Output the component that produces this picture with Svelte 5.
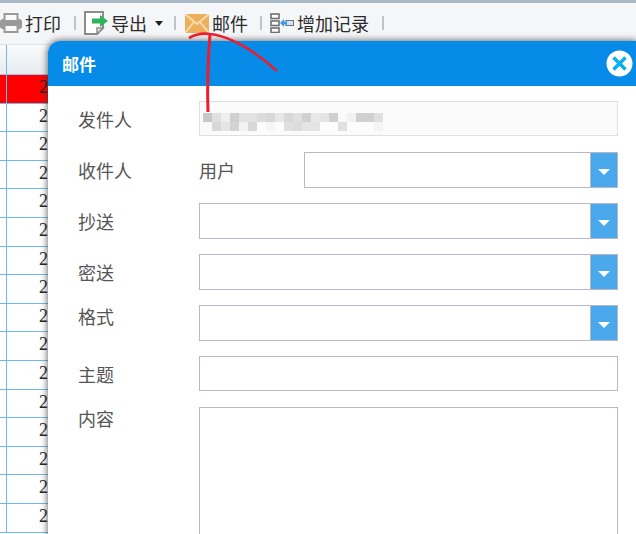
<script>
    let rows = Array(16).fill("2");
    let blurRows = [
        ["#c8c8c8", "#e0e0e0", "#eeeeee", "#d0d0d0", "#e2e2e2", "#e2e2e2", "#dcdcdc", "#d8d8d8", "#e6e6e6", "#d8d8d8", "#e0e0e0", "#d0d0d0", "#e8e8e8", "#e4e4e4", "#d0d0d0", "#fafafa", "#f2f2f2", "#d0d0d0", "#d0d0d0", "#e0e0e0"],
        ["#fafafa", "#d8d8d8", "#e4e4e4", "#d4d4d4", "#f2f2f2", "#d8d8d8", "#fcfcfc", "#f6f6f6", "#fcfcfc", "#e0e0e0", "#dcdcdc", "#e4e4e4", "#e4e4e4", "#fcfcfc", "#fcfcfc", "#e0e0e0", "#fcfcfc", "#fcfcfc", "#fcfcfc", "#f4f4f4"]
    ];
</script>

<div class="page">
    <div class="toolbar">
        <div class="tool print">
            <svg width="22" height="20" viewBox="0 0 22 20">
                <rect x="0" y="6" width="22" height="10" rx="3" fill="#9a9a9a" />
                <rect x="4.5" y="1" width="13" height="7" fill="#fafafa" stroke="#9a9a9a" stroke-width="2" />
                <rect x="4.5" y="12" width="13" height="7" fill="#fafafa" stroke="#9a9a9a" stroke-width="2" />
            </svg>
            <span>打印</span>
        </div>
        <i class="sep"></i>
        <div class="tool export">
            <svg width="24" height="24" viewBox="0 0 24 24">
                <path d="M1 1H19V17L13 23H1Z" fill="#fff" stroke="#8c8c8c" stroke-width="2" />
                <path d="M13 23V17H19Z" fill="#e6e6e6" stroke="#8c8c8c" stroke-width="1.5" />
                <path d="M8 7.5H16V4L24 10L16 16V12.5H8Z" fill="#2fb45c" />
            </svg>
            <span>导出</span>
            <b class="caret"></b>
        </div>
        <i class="sep"></i>
        <div class="tool mail">
            <svg width="24" height="19" viewBox="0 0 24 19">
                <rect width="24" height="19" fill="#ecb05c" />
                <path d="M0 0L12 10L24 0M0 19L9 8M24 19L15 8" fill="none" stroke="#f8dcae" stroke-width="1.8" />
            </svg>
            <span>邮件</span>
        </div>
        <i class="sep"></i>
        <div class="tool add">
            <svg width="24" height="20" viewBox="0 0 24 20">
                <rect x="1" y="1" width="8" height="4.5" fill="#fff" stroke="#707070" stroke-width="1.6" />
                <rect x="1" y="8" width="8" height="4.5" fill="#fff" stroke="#707070" stroke-width="1.6" />
                <rect x="1" y="15" width="8" height="4.5" fill="#fff" stroke="#707070" stroke-width="1.6" />
                <rect x="16" y="7.5" width="7.5" height="5" fill="#cfe6f8" stroke="#707070" />
                <path d="M10 10L14 6V8.5H17V11.5H14V14Z" fill="#3f9ae8" />
            </svg>
            <span>增加记录</span>
        </div>
        <i class="sep"></i>
    </div>

    <div class="table">
        <div class="head"><i></i></div>
        {#each rows as value, index}
            <div class="row" class:red={index === 0}><i></i><span>{value}</span></div>
        {/each}
    </div>

    <div class="modal">
        <div class="title">
            <span>邮件</span>
            <svg class="close" width="27" height="27" viewBox="0 0 27 27">
                <circle cx="13.5" cy="13.5" r="13" fill="#fff" />
                <path d="M7.5 7.5L19.5 19.5M19.5 7.5L7.5 19.5" stroke="#0bb0ee" stroke-width="3.6" />
            </svg>
        </div>
        <div class="form">
            <label class="field" for="from">发件人</label>
            <div class="sender" id="from">
                {#each blurRows as cells}
                    <div class="blur">
                        {#each cells as color}
                            <span style="background: {color}"></span>
                        {/each}
                    </div>
                {/each}
            </div>

            <span class="field">收件人</span>
            <div class="user">
                <span>用户</span>
                <div class="select"><button aria-label="open"></button></div>
            </div>

            <span class="field">抄送</span>
            <div class="select"><button aria-label="open"></button></div>

            <span class="field">密送</span>
            <div class="select"><button aria-label="open"></button></div>

            <span class="field top">格式</span>
            <div class="select"><button aria-label="open"></button></div>

            <span class="field">主题</span>
            <div class="input"></div>

            <span class="field top">内容</span>
            <div class="input area"></div>
        </div>
    </div>

    <svg class="scribble" width="636" height="534" viewBox="0 0 636 534">
        <path d="M189 38C196 34 203 33 210 34C235 37 258 54 277 71" fill="none" stroke="#ee1c2c" stroke-width="2.6" />
        <path d="M210 34C208 60 207 85 208 112" fill="none" stroke="#ee1c2c" stroke-width="3" />
    </svg>
</div>

<style>
    :global(body) {
        margin: 0;
    }

    * {
        box-sizing: border-box;
    }

    .page {
        position: relative;
        width: 636px;
        height: 534px;
        overflow: hidden;
        background: #fff;
        font-family: "Noto Sans CJK SC", "Liberation Sans", sans-serif;
        font-size: 18px;
        color: #2b2b2b;
    }

    .toolbar {
        display: flex;
        align-items: center;
        height: 45px;
        padding-bottom: 1px;
        background: #f5f6f8;
        border-top: 3px solid #a9b9c6;
        border-bottom: 1px solid #dfe3e8;
    }

    .tool {
        display: flex;
        align-items: center;
        flex: none;
    }

    .tool span {
        line-height: 24px;
    }

    .print {
        width: 61px;
        gap: 3px;
    }

    .export {
        margin-left: 0;
        width: 79px;
        gap: 3px;
    }

    .mail {
        width: 63px;
        gap: 3px;
    }

    .add {
        width: 100px;
        gap: 3px;
    }

    .sep {
        flex: none;
        width: 2px;
        height: 14px;
        background: #c4c4c4;
    }

    .print + .sep {
        margin: 0 8px 0 13px;
    }

    .export + .sep {
        margin: 0 9px 0 11px;
    }

    .mail + .sep {
        margin: 0 8px 0 12px;
    }

    .add + .sep {
        margin-left: 12px;
    }

    .caret {
        margin-left: 5px;
        border: 4px solid transparent;
        border-top: 5px solid #222;
        border-bottom: 0;
    }

    .head {
        position: relative;
        height: 30px;
        background: linear-gradient(#fafbfc, #e6ebf0);
        border-bottom: 1px solid #8cc6f2;
    }

    .head i,
    .row i {
        display: block;
        position: absolute;
        top: 0;
        left: 6px;
        width: 1px;
        height: 29px;
        background: #6db9f2;
    }

    .row {
        position: relative;
        height: 28.6px;
        padding-left: 39px;
        border-bottom: 1px solid #6db9f2;
        font-family: "Liberation Serif", serif;
        line-height: 25px;
        color: #222;
    }

    .row.red {
        background: #ff0000;
    }

    .modal {
        position: absolute;
        top: 41px;
        left: 48px;
        right: 0;
        bottom: -40px;
        background: #fff;
        border-radius: 12px 0 0 0;
        box-shadow: 0 0 6px 1px rgba(60, 60, 60, 0.7);
    }

    .title {
        display: flex;
        align-items: center;
        justify-content: space-between;
        height: 45px;
        padding: 0 3px 0 14px;
        background: #068be9;
        border-radius: 12px 0 0 0;
        color: #fff;
        font-size: 17px;
        font-weight: 700;
    }

    .form {
        display: grid;
        grid-template-columns: 121px 419px;
        grid-auto-rows: 36px;
        row-gap: 15px;
        padding: 15px 0 0 30px;
        color: #555;
    }

    .field {
        align-self: center;
        line-height: 26px;
    }

    .field.top {
        align-self: start;
        line-height: 23px;
    }

    .sender {
        height: 35px;
        padding: 11px 0 0 3px;
        background: #fbfbfb;
        border: 1px solid #dedee4;
    }

    .blur {
        display: flex;
    }

    .blur span {
        width: 9px;
        height: 9px;
    }

    .user {
        display: flex;
        align-items: center;
        justify-content: space-between;
    }

    .user .select {
        width: 314px;
    }

    .select {
        display: flex;
        justify-content: flex-end;
        height: 36px;
        background: #fff;
        border: 1px solid #b9b6c8;
    }

    .select button {
        position: relative;
        width: 27px;
        padding: 0;
        background: #4aa9ec;
        border: 0;
        border-left: 1px solid #b9b6c8;
    }

    .select button::after {
        content: "";
        position: absolute;
        top: 16px;
        left: 7px;
        border: 6px solid transparent;
        border-top: 6px solid #fff;
        border-bottom: 0;
    }

    .input {
        height: 35px;
        border: 1px solid #b9b6c8;
    }

    .input.area {
        height: 180px;
    }

    .scribble {
        position: absolute;
        top: 0;
        left: 0;
        pointer-events: none;
    }
</style>
